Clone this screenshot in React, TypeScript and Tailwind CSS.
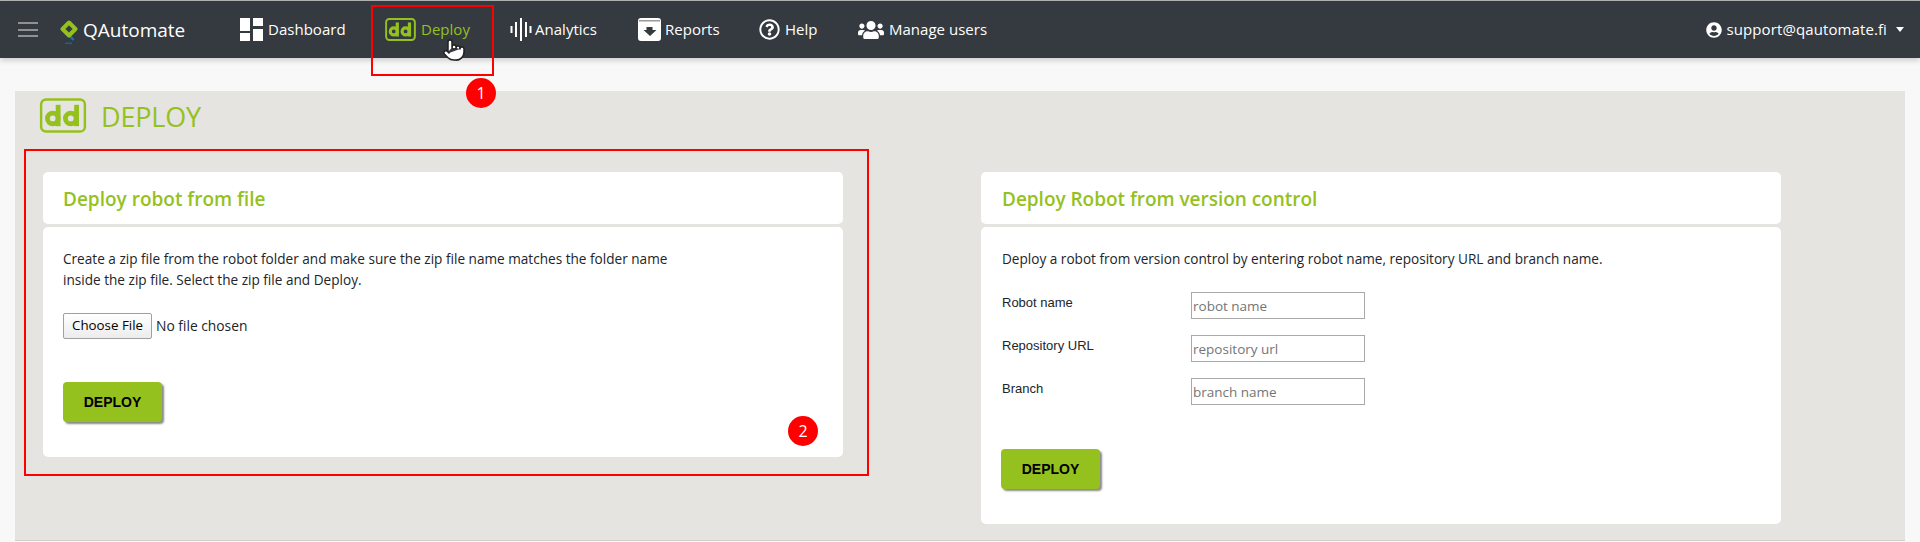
import { FaRegQuestionCircle, FaUsers, FaUserCircle } from "react-icons/fa";
import { Pointer } from "lucide-react";

function DD({ w, h, color, sw }: { w: number; h: number; color: string; sw: number }) {
  return (
    <svg width={w} height={h} viewBox="0 0 48 36" fill="none">
      <rect x="1.5" y="1.5" width="45" height="33" rx="5" stroke={color} strokeWidth={sw} />
      <circle cx="13.5" cy="21" r="5.5" stroke={color} strokeWidth="5" />
      <rect x="16.5" y="7" width="5" height="22" fill={color} />
      <circle cx="32" cy="21" r="5.5" stroke={color} strokeWidth="5" />
      <rect x="35.500" y="7" width="5" height="22" fill={color} />
    </svg>
  );
}

function NavItem({ icon, label, gap, width, active }: { icon: React.ReactNode; label: string; gap: string; width: string; active?: boolean }) {
  return (
    <div className={`flex items-center ${gap} ${width} ${active ? "text-[#95c11f]" : "text-white"}`}>
      {icon}
      <span className="text-[15px] leading-[23px] tracking-[0.02px]">{label}</span>
    </div>
  );
}

function DeployButton() {
  return (
    <button className="h-[40px] w-[99px] rounded-[4px] bg-[#95c11f] text-[14px] font-bold text-black shadow-[2px_2px_2px_#8a8a8a] [font-family:'Liberation_Sans',sans-serif]">
      DEPLOY
    </button>
  );
}

function Field({ label, placeholder }: { label: string; placeholder: string }) {
  return (
    <div className="flex items-start h-[27px]">
      <label className="w-[190px] pl-px pt-[1px] text-[13px] leading-[20px] text-[#212529] [font-family:'Liberation_Sans',sans-serif]">{label}</label>
      <input
        placeholder={placeholder}
        className="h-[27px] w-[174px] border border-[#a9a9a9] bg-white px-[1px] pt-px text-[13.5px] outline-none placeholder:text-[#757575] [font-family:'Open_Sans',sans-serif]"
      />
    </div>
  );
}

export default function App() {
  return (
    <div className="relative h-[542px] overflow-hidden bg-[#f8f8f8] [font-family:'Open_Sans',sans-serif]">
      <div className="h-px bg-[#b8b8b8]" />
      <nav className="flex h-[57px] items-center bg-[#343a40] shadow-[0_2px_6px_rgba(0,0,0,0.2)]">
        <div className="ml-[18px] flex w-[20px] flex-col gap-[4.5px]">
          <div className="h-[2px] bg-[#8f9193]" />
          <div className="h-[2px] bg-[#8f9193]" />
          <div className="h-[2px] bg-[#8f9193]" />
        </div>
        <div className="ml-[22px] flex w-[180px] items-center">
          <svg width="18" height="26" viewBox="0 0 18 26" fill="none" className="mt-[6px]">
            <path d="M10 16 L13.500 20" stroke="#1d71b8" strokeWidth="2.500" />
            <path d="M9 2.500 L15.500 9 L9 15.500 L2.500 9 Z" stroke="#95c11f" strokeWidth="4" strokeLinejoin="round" />
            <rect x="5" y="22.500" width="7" height="1.500" fill="#1d5f8f" />
          </svg>
          <span className="ml-[5px] text-[19px] leading-[24px] text-white">QAutomate</span>
        </div>
        <NavItem
          gap="gap-[5px]"
          width="w-[145px]"
          label="Dashboard"
          icon={
            <svg width="23" height="23" viewBox="0 0 23 23" fill="white">
              <rect x="0" y="0" width="10" height="13" />
              <rect x="0" y="15" width="10" height="8" />
              <rect x="13" y="0" width="10" height="8" />
              <rect x="13" y="11" width="10" height="12" />
            </svg>
          }
        />
        <NavItem active gap="gap-[5px]" width="w-[125px]" label="Deploy" icon={<DD w={31} h={23} color="#95c11f" sw={3} />} />
        <NavItem
          gap="gap-[3px]"
          width="w-[128px]"
          label="Analytics"
          icon={
            <svg width="22" height="23" viewBox="0 0 22 23" fill="white">
              <rect x="0.5" y="8" width="2" height="7" />
              <rect x="5" y="4" width="2" height="15" />
              <rect x="10" y="0" width="2" height="23" />
              <rect x="15" y="4" width="2" height="15" />
              <rect x="19.5" y="8" width="2" height="7" />
            </svg>
          }
        />
        <NavItem
          gap="gap-[4px]"
          width="w-[121px]"
          label="Reports"
          icon={
            <svg width="23" height="23" viewBox="0 0 23 23">
              <rect width="23" height="23" rx="3" fill="white" />
              <rect x="1" y="2" width="21" height="1.500" fill="#9a9a9a" />
              <path d="M8.500 9h6v3h4l-6.500 6-6.500-6h3z" fill="#343a40" />
            </svg>
          }
        />
        <NavItem gap="gap-[5px]" width="w-[99px]" label="Help" icon={<FaRegQuestionCircle size={21} />} />
        <NavItem gap="gap-[5px]" width="w-[140px]" label="Manage users" icon={<FaUsers size={26} />} />
        <div className="ml-auto mr-[16px] flex items-center text-white">
          <FaUserCircle size={16} />
          <span className="ml-[5px] text-[15px] leading-[23px] tracking-[0.1px]">support@qautomate.fi</span>
          <div className="ml-[9px] h-0 w-0 border-x-[4.500px] border-t-[5px] border-x-transparent border-t-white" />
        </div>
      </nav>

      <main className="mx-[15px] mt-[33px] h-[450px] border-b border-[#cfcfcb] bg-[#e5e4e0]">
        <div className="flex h-[81px] items-start pl-[24px] pt-[7px]">
          <DD w={48} h={35} color="#95c11f" sw={2.500} />
          <h1 className="ml-[14px] mt-px text-[27px] font-medium leading-[36px] tracking-[-0.2px] text-[#95c11f]">DEPLOY</h1>
        </div>
        <div className="flex items-start gap-[138px] pl-[28px]">
          <section className="w-[800px]">
            <div className="flex h-[52px] items-center rounded-[5px] bg-white px-[20px] pt-[3px]">
              <h2 className="text-[19px] font-semibold text-[#95c11f]">Deploy robot from file</h2>
            </div>
            <div className="mt-[3px] h-[230px] rounded-[5px] bg-white px-[20px] pt-[21px]">
              <p className="text-[13.6px] leading-[21px] text-[#212529]">
                Create a zip file from the robot folder and make sure the zip file name matches the folder name
                <br />
                inside the zip file. Select the zip file and Deploy.
              </p>
              <div className="mt-[23px] flex items-center">
                <button className="h-[26px] w-[89px] rounded-[2px] border border-[#a0a0a0] bg-gradient-to-b from-white to-[#ececec] text-[13.33px] text-black">
                  Choose File
                </button>
                <span className="ml-[4px] text-[13.8px] text-[#212529]">No file chosen</span>
              </div>
              <div className="mt-[43px]">
                <DeployButton />
              </div>
            </div>
          </section>
          <section className="w-[800px]">
            <div className="flex h-[52px] items-center rounded-[5px] bg-white px-[21px] pt-[3px]">
              <h2 className="text-[19px] font-semibold tracking-[-0.03px] text-[#95c11f]">Deploy Robot from version control</h2>
            </div>
            <div className="mt-[3px] h-[297px] rounded-[5px] bg-white px-[20px] pt-[21px]">
              <p className="pl-px text-[13.6px] leading-[21px] text-[#212529]">
                Deploy a robot from version control by entering robot name, repository URL and branch name.
              </p>
              <div className="mt-[23px] flex flex-col gap-[16px]">
                <Field label="Robot name" placeholder="robot name" />
                <Field label="Repository URL" placeholder="repository url" />
                <Field label="Branch" placeholder="branch name" />
              </div>
              <div className="mt-[44px]">
                <DeployButton />
              </div>
            </div>
          </section>
        </div>
      </main>

      {/* annotations over the screenshot */}
      <div className="absolute left-[371px] top-[5px] h-[71px] w-[123px] border-2 border-[#ff0000]" />
      <div className="absolute left-[24px] top-[149px] h-[327px] w-[845px] border-2 border-[#ff0000]" />
      <div className="absolute left-[466px] top-[78px] flex h-[30px] w-[30px] items-center justify-center rounded-full bg-[#ff0000] text-[16px] text-white">1</div>
      <div className="absolute left-[788px] top-[416px] flex h-[30px] w-[30px] items-center justify-center rounded-full bg-[#ff0000] text-[16px] text-white">2</div>
      <Pointer className="absolute left-[442px] top-[38px]" size={24} fill="white" color="#222" strokeWidth={1.500} />
    </div>
  );
}
